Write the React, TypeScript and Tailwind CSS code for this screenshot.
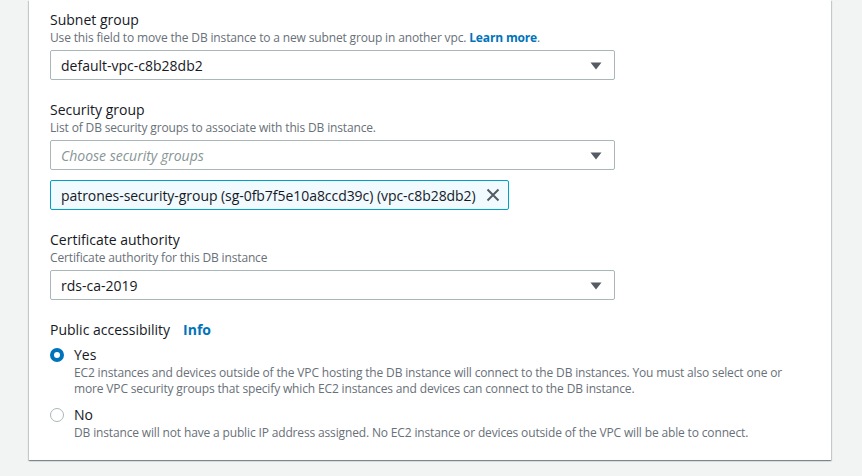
import React from "react";

const font = { fontFamily: '"Open Sans", "Noto Sans", Arial, sans-serif' };

function Arrow() {
  return (
    <svg width="12" height="8" viewBox="0 0 12 8" className="absolute right-[12px] top-[11px]">
      <path d="M0.5 0.5 H11.5 L6 7.5 Z" fill="#545b64" />
    </svg>
  );
}

function Select({ value, placeholder }: { value?: string; placeholder?: string }) {
  return (
    <div className="relative mt-[4px] h-[30px] w-[565px] rounded-[2px] border border-[#aab7b8] bg-white pl-[10px] flex items-center">
      {value ? (
        <span className="text-[14px] text-[#16191f]">{value}</span>
      ) : (
        <span className="text-[14px] italic text-[#879596]">{placeholder}</span>
      )}
      <Arrow />
    </div>
  );
}

function Label({ children }: { children: React.ReactNode }) {
  return <div className="text-[14px] leading-[20px] text-[#16191f]">{children}</div>;
}

function Desc({ children }: { children: React.ReactNode }) {
  return <div className="text-[12px] leading-[16px] tracking-[-0.15px] text-[#687078]">{children}</div>;
}

function Radio({ checked }: { checked: boolean }) {
  return checked ? (
    <div className="h-[14px] w-[14px] rounded-full border-[4px] border-[#0073bb] bg-white" />
  ) : (
    <div className="h-[14px] w-[14px] rounded-full border border-[#aab7b8] bg-white" />
  );
}

export default function App() {
  return (
    <div className="h-[476px] w-full overflow-hidden bg-[#f2f3f3]" style={font}>
      <div className="ml-[29px] w-[802px] bg-white pl-[21px] pt-[10px] pb-[19px] shadow-[0_1px_1px_0_rgba(0,28,36,0.3),1px_1px_1px_0_rgba(0,28,36,0.15),-1px_1px_1px_0_rgba(0,28,36,0.15)]">
        <Label>Subnet group</Label>
        <Desc>
          Use this field to move the DB instance to a new subnet group in another vpc.{" "}
          <span className="font-bold text-[#0073bb]">Learn more</span>.
        </Desc>
        <Select value="default-vpc-c8b28db2" />

        <div className="mt-[20px]">
          <Label>Security group</Label>
          <Desc>List of DB security groups to associate with this DB instance.</Desc>
          <Select placeholder="Choose security groups" />
          <div className="mt-[10px] inline-flex h-[30px] items-center rounded-[2px] border border-[#00a1c9] bg-[#f1faff] pl-[10px] pr-[7px]">
            <span className="text-[14px] tracking-[-0.05px] text-[#16191f]">
              patrones-security-group (sg-0fb7f5e10a8ccd39c) (vpc-c8b28db2)
            </span>
            <svg width="16" height="16" viewBox="0 0 16 16" className="ml-[9px]">
              <path d="M2.5 2.5 L13.5 13.5 M13.5 2.5 L2.5 13.5" stroke="#545b64" strokeWidth="2" fill="none" />
            </svg>
          </div>
        </div>

        <div className="mt-[20px]">
          <Label>Certificate authority</Label>
          <Desc>Certificate authority for this DB instance</Desc>
          <Select value="rds-ca-2019" />
        </div>

        <div className="mt-[20px]">
          <div className="flex items-center text-[14px] leading-[20px]">
            <span className="text-[#16191f]">Public accessibility</span>
            <span className="ml-[13px] font-bold text-[#0073bb]">Info</span>
          </div>
          <div className="mt-[5px] flex">
            <div className="flex h-[20px] w-[24px] items-center">
              <Radio checked />
            </div>
            <div>
              <div className="text-[14px] leading-[20px] text-[#16191f]">Yes</div>
              <Desc>
                <div>EC2 instances and devices outside of the VPC hosting the DB instance will connect to the DB instances. You must also select one or</div>
                <div>more VPC security groups that specify which EC2 instances and devices can connect to the DB instance.</div>
              </Desc>
            </div>
          </div>
          <div className="mt-[8px] flex">
            <div className="flex h-[20px] w-[24px] items-center">
              <Radio checked={false} />
            </div>
            <div>
              <div className="text-[14px] leading-[20px] text-[#16191f]">No</div>
              <Desc>
                DB instance will not have a public IP address assigned. No EC2 instance or devices outside of the VPC will be able to connect.
              </Desc>
            </div>
          </div>
        </div>
      </div>
    </div>
  );
}
